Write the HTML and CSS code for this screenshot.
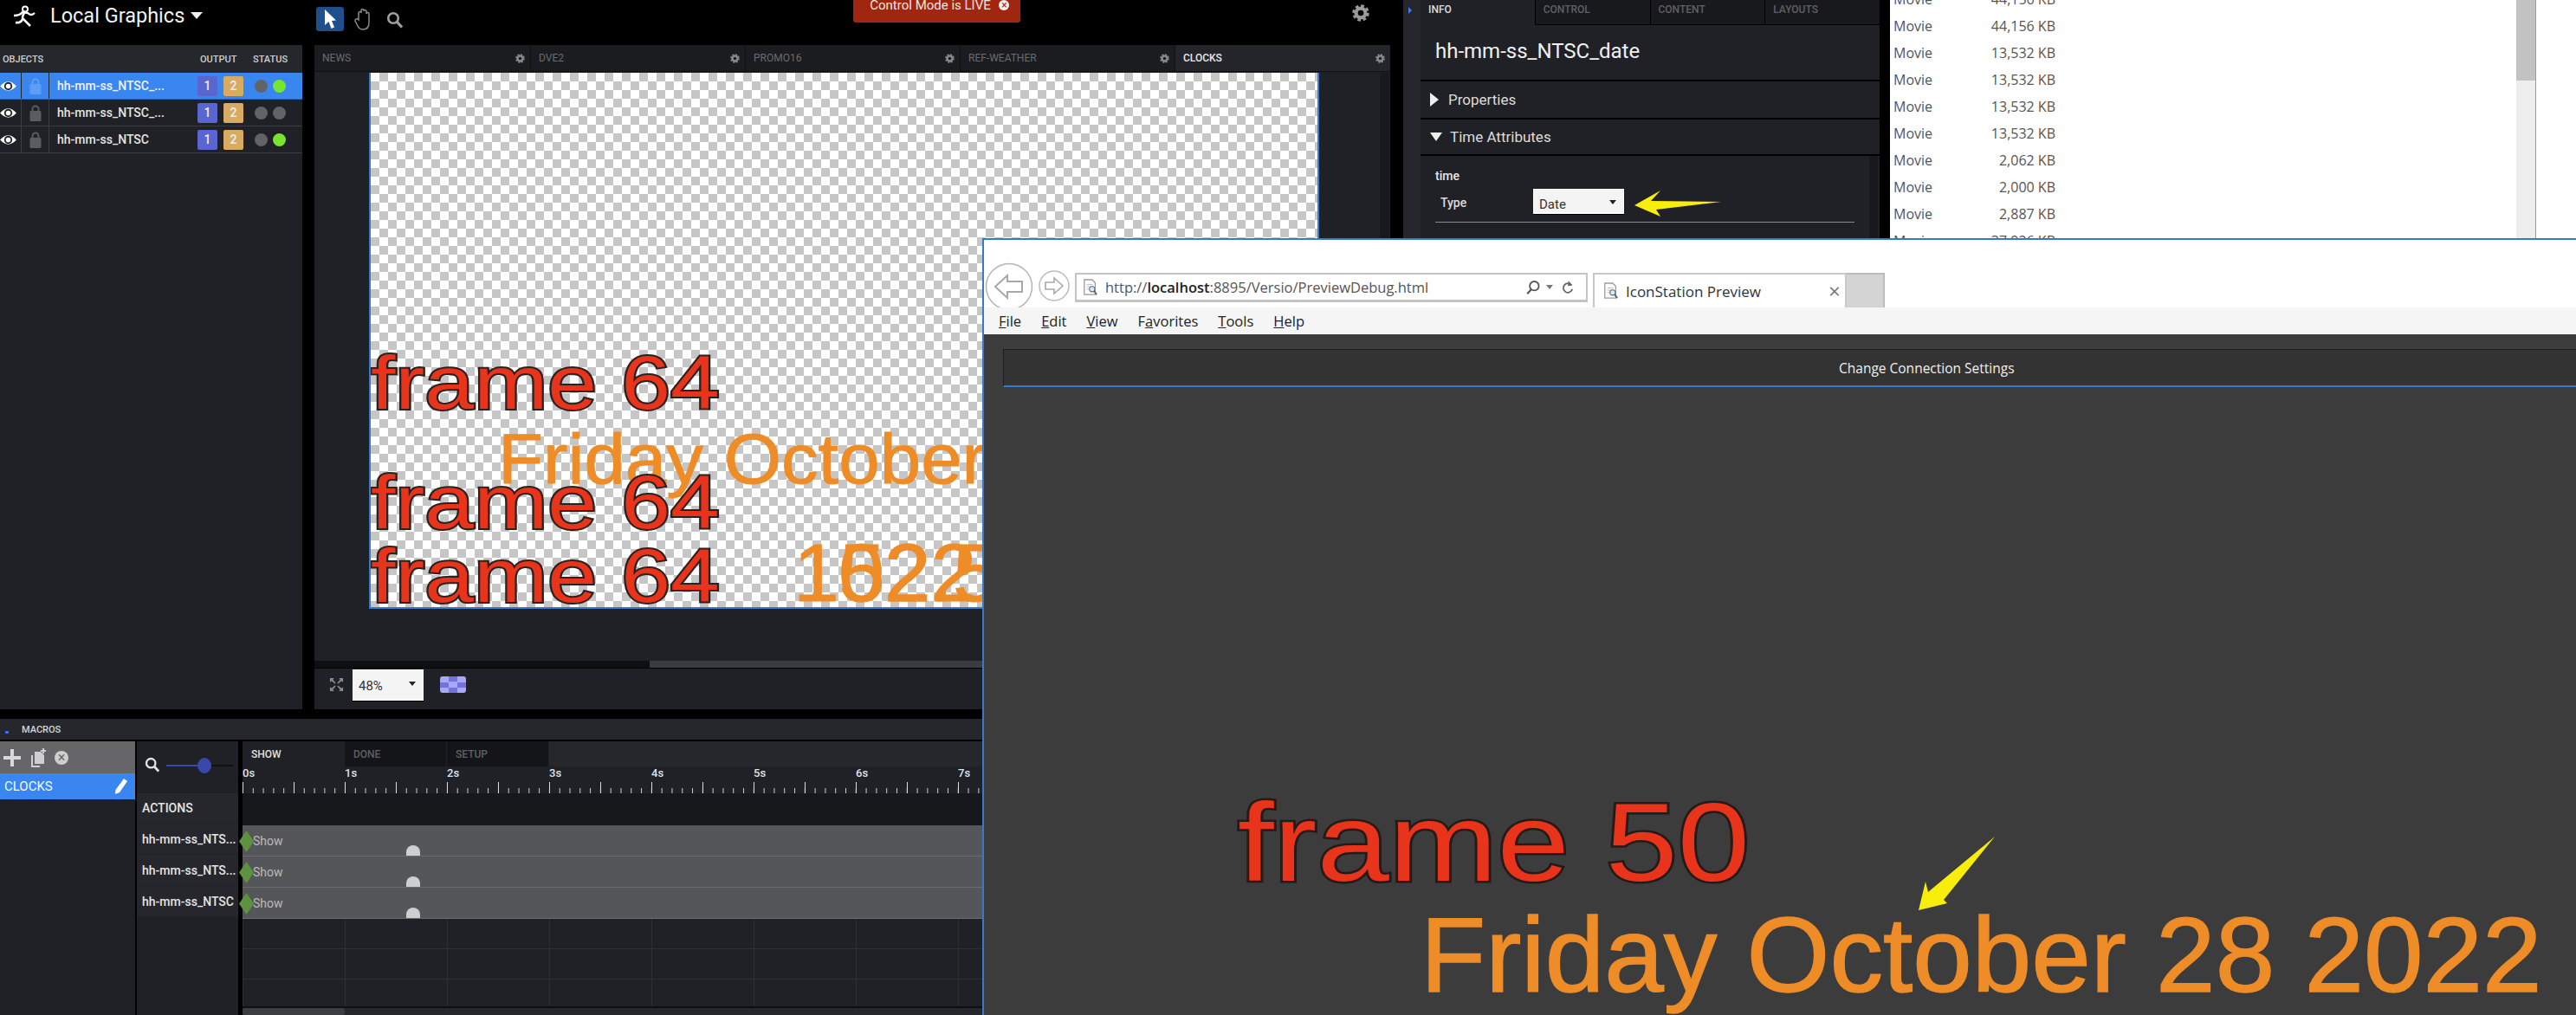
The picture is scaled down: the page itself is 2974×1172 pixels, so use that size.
FILE: index.html
```html
<!DOCTYPE html>
<html lang="en">

<head>
    <meta charset="UTF-8">
    <title>Local Graphics</title>
    <link rel="stylesheet" href="styles.css">
</head>

<body>
    <svg class="defs" width="0" height="0">
        <symbol id="gear" viewBox="0 0 24 24">
            <circle cx="12" cy="12" r="6.5" fill="none" stroke="currentColor" stroke-width="5"></circle>
            <circle cx="12" cy="12" r="10" fill="none" stroke="currentColor" stroke-width="3.4" stroke-dasharray="4.4 3.45"></circle>
        </symbol>
        <symbol id="eye" viewBox="0 0 20 16">
            <path d="M0 8 Q10 -3 20 8 Q10 19 0 8Z" fill="#fff"></path>
            <circle cx="10" cy="8" r="5" fill="#24252a"></circle>
            <circle cx="10" cy="8" r="3" fill="#fff"></circle>
        </symbol>
        <symbol id="lock" viewBox="0 0 14 20">
            <path d="M3.5 9V6a3.5 3.5 0 0 1 7 0v3" fill="none" stroke="currentColor" stroke-width="2"></path>
            <rect x="0.5" y="8" width="13" height="12" rx="1.5" fill="currentColor"></rect>
        </symbol>
        <symbol id="search" viewBox="0 0 20 20">
            <circle cx="8" cy="8" r="5.8" fill="none" stroke="currentColor" stroke-width="2.6"></circle>
            <path d="M12.5 12.5L18 18.5" stroke="currentColor" stroke-width="3.2"></path>
        </symbol>
        <symbol id="pageicon" viewBox="0 0 20 22">
            <path d="M2 1H12L16 5V20H2Z" fill="#fff" stroke="#9a9a9a" stroke-width="1.4"></path>
            <path d="M5 7H13M5 10H13M5 13H10" stroke="#b5b5b5"></path>
            <circle cx="12" cy="13" r="3.4" fill="#dfe8f2" stroke="#5f6f80" stroke-width="1.2"></circle>
            <path d="M14.5 15.5L18 20" stroke="#5f5f5f" stroke-width="2"></path>
        </symbol>
    </svg>

    <div class="app">
        <div class="work">
            <div class="topbar">
                <svg class="logo" viewBox="0 0 26 26">
                    <circle cx="14" cy="4.5" r="3" fill="none" stroke="#fff" stroke-width="2"></circle>
                    <path d="M1 12 Q8 12 11 8 L17 9 Q21 13 25 9" fill="none" stroke="#fff" stroke-width="2.4"></path>
                    <path d="M13 9 Q9 15 13 17 L20 24 M11 16 Q9 21 3 20" fill="none" stroke="#fff" stroke-width="2.6"></path>
                </svg>
                <span class="app-title">Local Graphics</span>
                <span class="caret"></span>
                <span class="tool-on">
                    <svg width="16" height="24" viewBox="0 0 16 24"><path d="M2 1V19L6.5 15L9.5 23L13 21.5L10 14L15 13.5Z" fill="#fff"></path></svg>
                </span>
                <svg class="tool-hand" viewBox="0 0 20 26">
                    <path d="M5 14V6a1.5 1.5 0 0 1 3 0V3a1.5 1.5 0 0 1 3 0V4a1.5 1.5 0 0 1 3 0V7a1.5 1.5 0 0 1 3 0V17Q17 25 10 25Q6 25 4 21L1 15Q1 12 4 13Z" fill="none" stroke="#8a8a8a" stroke-width="1.5"></path>
                </svg>
                <svg class="tool-search"><use href="#search"></use></svg>
                <div class="live-btn">Control Mode is LIVE <span class="live-x">&times;</span></div>
                <svg class="top-gear"><use href="#gear"></use></svg>
            </div>

            <div class="panes">
                <div class="objects">
                    <div class="obj-head">
                        <span class="obj-head-name">OBJECTS</span>
                        <span class="obj-head-out">OUTPUT</span>
                        <span>STATUS</span>
                    </div>
                    <div class="obj-row selected">
                        <span class="obj-eye"><svg width="19" height="15"><use href="#eye"></use></svg></span>
                        <span class="obj-lock"><svg width="14" height="20"><use href="#lock"></use></svg></span>
                        <span class="obj-name">hh-mm-ss_NTSC_...</span>
                        <span class="badge one">1</span>
                        <span class="badge two">2</span>
                        <span class="dot"></span>
                        <span class="dot green"></span>
                    </div>
                    <div class="obj-row">
                        <span class="obj-eye"><svg width="19" height="15"><use href="#eye"></use></svg></span>
                        <span class="obj-lock"><svg width="14" height="20"><use href="#lock"></use></svg></span>
                        <span class="obj-name">hh-mm-ss_NTSC_...</span>
                        <span class="badge one">1</span>
                        <span class="badge two">2</span>
                        <span class="dot"></span>
                        <span class="dot"></span>
                    </div>
                    <div class="obj-row">
                        <span class="obj-eye"><svg width="19" height="15"><use href="#eye"></use></svg></span>
                        <span class="obj-lock"><svg width="14" height="20"><use href="#lock"></use></svg></span>
                        <span class="obj-name">hh-mm-ss_NTSC</span>
                        <span class="badge one">1</span>
                        <span class="badge two">2</span>
                        <span class="dot"></span>
                        <span class="dot green"></span>
                    </div>
                </div>

                <div class="stage">
                    <div class="stage-tabs">
                        <div class="stage-tab">NEWS<svg class="tab-gear"><use href="#gear"></use></svg></div>
                        <div class="stage-tab">DVE2<svg class="tab-gear"><use href="#gear"></use></svg></div>
                        <div class="stage-tab">PROMO16<svg class="tab-gear"><use href="#gear"></use></svg></div>
                        <div class="stage-tab">REF-WEATHER<svg class="tab-gear"><use href="#gear"></use></svg></div>
                        <div class="stage-tab active">CLOCKS<svg class="tab-gear"><use href="#gear"></use></svg></div>
                    </div>
                    <div class="stage-view">
                        <div class="canvas">
                            <span class="frame-text ft1">frame 64</span>
                            <span class="date-text dt1">Friday October 28 2022</span>
                            <span class="frame-text ft2">frame 64</span>
                            <span class="frame-text ft3">frame 64</span>
                            <span class="clock-text ct1">1522</span>
                            <span class="clock-text ct2">02.5</span>
                        </div>
                        <div class="stage-vscroll"></div>
                    </div>
                    <div class="stage-scroll"><div class="stage-scroll-off"></div></div>
                    <div class="stage-tools">
                        <svg class="fit-icon" viewBox="0 0 18 18">
                            <path d="M1 1H6L4.5 3L8 7L7 8L3 4.5L1 6ZM17 1V6L15 4.5L11 8L10 7L13.5 3L12 1ZM1 17V12L3 13.500L7 10L8 11L4.500 15L6 17ZM17 17H12L13.500 15L10 11L11 10L15 13.500L17 12Z" fill="#8c8c8c"></path>
                        </svg>
                        <div class="white-select zoom-select">48%<span class="mini-caret"></span></div>
                        <div class="checker-btn"></div>
                    </div>
                </div>
            </div>

            <div class="macros-bar"><span class="macros-mark"></span>MACROS</div>
            <div class="macros">
                <div class="macro-list">
                    <div class="macro-tools">
                        <svg width="20" height="20" viewBox="0 0 20 20"><path d="M8 0H12V8H20V12H12V20H8V12H0V8H8Z" fill="#d8d8d8"></path></svg>
                        <svg width="18" height="22" viewBox="0 0 18 22"><path d="M5 4H12L16 8V18H5Z" fill="#cfcfcf"></path><path d="M2 8V21H11" fill="none" stroke="#cfcfcf" stroke-width="2"></path><path d="M15 0V6M12 3H18" stroke="#cfcfcf" stroke-width="2"></path></svg>
                        <span class="macro-x">&times;</span>
                    </div>
                    <div class="macro-item">CLOCKS
                        <svg width="16" height="20" viewBox="0 0 16 20"><path d="M11 1L15 4L6 17L1 19L1.500 14Z" fill="#fff"></path></svg>
                    </div>
                </div>
                <div class="macro-labels">
                    <div class="macro-zoom">
                        <svg class="zoom-glass"><use href="#search"></use></svg>
                        <div class="slider"><span class="slider-fill"></span><span class="slider-thumb"></span></div>
                    </div>
                    <div class="macro-label actions">ACTIONS</div>
                    <div class="macro-label">hh-mm-ss_NTS...</div>
                    <div class="macro-label">hh-mm-ss_NTS...</div>
                    <div class="macro-label">hh-mm-ss_NTSC</div>
                </div>
                <div class="timeline">
                    <div class="time-tabs">
                        <div class="time-tab active">SHOW</div>
                        <div class="time-tab">DONE</div>
                        <div class="time-tab">SETUP</div>
                    </div>
                    <div class="ruler">
                        <span>0s</span><span>1s</span><span>2s</span><span>3s</span>
                        <span>4s</span><span>5s</span><span>6s</span><span>7s</span>
                    </div>
                    <div class="actions-strip"></div>
                    <div class="track"><span class="key"></span>Show<span class="end-mark"></span></div>
                    <div class="track"><span class="key"></span>Show<span class="end-mark"></span></div>
                    <div class="track"><span class="key"></span>Show<span class="end-mark"></span></div>
                    <div class="grid-rows"></div>
                    <div class="time-scroll"><span class="time-thumb"></span></div>
                </div>
            </div>
        </div>

        <div class="side-strip"><span class="side-mark"></span></div>

        <div class="info">
            <div class="info-tabs">
                <div class="info-tab active">INFO</div>
                <div class="info-tab">CONTROL</div>
                <div class="info-tab">CONTENT</div>
                <div class="info-tab">LAYOUTS</div>
            </div>
            <div class="info-title">hh-mm-ss_NTSC_date</div>
            <div class="info-section"><span class="tri-right"></span>Properties</div>
            <div class="info-section short"><span class="tri-down"></span>Time Attributes</div>
            <div class="info-body">
                <div class="attr-box">
                    <div class="attr-name">time</div>
                    <div class="attr-row">
                        <span class="attr-label">Type</span>
                        <div class="white-select type-select">Date<span class="mini-caret"></span></div>
                    </div>
                </div>
                <div class="info-scroll"></div>
            </div>
        </div>

        <div class="files">
            <div class="file-list">
                <div class="file-row"><span class="file-type">Movie</span><span class="file-size">44,156 KB</span></div>
                <div class="file-row"><span class="file-type">Movie</span><span class="file-size">44,156 KB</span></div>
                <div class="file-row"><span class="file-type">Movie</span><span class="file-size">13,532 KB</span></div>
                <div class="file-row"><span class="file-type">Movie</span><span class="file-size">13,532 KB</span></div>
                <div class="file-row"><span class="file-type">Movie</span><span class="file-size">13,532 KB</span></div>
                <div class="file-row"><span class="file-type">Movie</span><span class="file-size">13,532 KB</span></div>
                <div class="file-row"><span class="file-type">Movie</span><span class="file-size">2,062 KB</span></div>
                <div class="file-row"><span class="file-type">Movie</span><span class="file-size">2,000 KB</span></div>
                <div class="file-row"><span class="file-type">Movie</span><span class="file-size">2,887 KB</span></div>
                <div class="file-row"><span class="file-type">Movie</span><span class="file-size">37,926 KB</span></div>
            </div>
            <div class="file-scroll"><div class="file-thumb"></div></div>
        </div>
    </div>

    <div class="browser">
        <div class="ie-bar">
            <svg class="ie-back" viewBox="0 0 56 52">
                <circle cx="28" cy="28" r="26.500" fill="#fff" stroke="#b5b5b5" stroke-width="1.500"></circle>
                <path d="M12 28L26 15V22H43V34H26V41Z" fill="#fff" stroke="#a8a8a8" stroke-width="2"></path>
            </svg>
            <svg class="ie-forward" viewBox="0 0 36 36">
                <circle cx="18" cy="18" r="17" fill="#fff" stroke="#bdbdbd" stroke-width="1.500"></circle>
                <path d="M28 18L18 9V14H8V22H18V27Z" fill="#fff" stroke="#a8a8a8" stroke-width="1.600"></path>
            </svg>
            <div class="ie-address">
                <svg class="ie-page"><use href="#pageicon"></use></svg>
                <span class="ie-url">http://<b>localhost</b>:8895/Versio/PreviewDebug.html</span>
                <svg class="ie-search" viewBox="0 0 20 20">
                    <circle cx="11.500" cy="8" r="5.800" fill="none" stroke="#555" stroke-width="2"></circle>
                    <path d="M7.500 12.500L2.500 18" stroke="#555" stroke-width="2.400"></path>
                </svg>
                <span class="ie-drop"></span>
                <svg class="ie-refresh" viewBox="0 0 16 20">
                    <path d="M13 7A6 6 0 1 0 14 12" fill="none" stroke="#666" stroke-width="2"></path>
                    <path d="M9 1L14 7L8 8Z" fill="#666"></path>
                </svg>
            </div>
            <div class="ie-tab">
                <svg class="ie-page"><use href="#pageicon"></use></svg>
                <span class="ie-tab-name">IconStation Preview</span>
                <span class="ie-tab-x">&times;</span>
            </div>
            <div class="ie-newtab"></div>
        </div>
        <div class="ie-menu">
            <span><u>F</u>ile</span>
            <span><u>E</u>dit</span>
            <span><u>V</u>iew</span>
            <span>F<u>a</u>vorites</span>
            <span><u>T</u>ools</span>
            <span><u>H</u>elp</span>
        </div>
        <div class="preview">
            <div class="conn-btn">Change Connection Settings</div>
            <span class="frame-text big-frame">frame 50</span>
            <span class="date-text big-date">Friday October 28 2022</span>
        </div>
    </div>

    <svg class="notes" width="2974" height="1172" viewBox="0 0 2974 1172">
        <polygon points="1887,237 1917,220 1906,232 1987,233 1912,242 1917,250" fill="#f7ee0c"></polygon>
        <polygon points="2303,966 2226,1030 2223,1018 2215,1051 2248,1043 2244,1039" fill="#f7ee0c"></polygon>
    </svg>
</body>

</html>
```

FILE: styles.css
```css
/* General */
html, body {
    margin: 0;
    padding: 0;
}

body {
    position: relative;
    width: 2974px;
    height: 1172px;
    overflow: hidden;
    background-color: #000;
    color: #e8e8e8;
    font-family: Roboto, "Liberation Sans", sans-serif;
}

.defs {
    position: absolute;
}

.app {
    display: flex;
    height: 1172px;
}

.work {
    width: 1620px;
    flex: none;
    display: flex;
    flex-direction: column;
}

/* Top bar */
.topbar {
    height: 52px;
    display: flex;
    align-items: flex-start;
    flex: none;
}

.logo {
    width: 26px;
    height: 26px;
    margin: 6px 0 0 15px;
}

.app-title {
    margin: 3px 0 0 17px;
    font-size: 23.5px;
    line-height: 30px;
    color: #f2f2f2;
}

.caret {
    margin: 14px 0 0 7px;
    border-left: 7px solid transparent;
    border-right: 7px solid transparent;
    border-top: 8px solid #f2f2f2;
}

.tool-on {
    width: 32px;
    height: 28px;
    margin: 8px 0 0 131px;
    border-radius: 3px;
    background-color: #1f4e8c;
    display: flex;
    align-items: center;
    justify-content: center;
}

.tool-hand {
    width: 20px;
    height: 26px;
    margin: 9px 0 0 12px;
}

.tool-search {
    width: 20px;
    height: 20px;
    margin: 13px 0 0 17px;
    color: #a0a0a0;
}

.live-btn {
    width: 193px;
    height: 26px;
    margin-left: 519px;
    box-sizing: border-box;
    padding-left: 19px;
    background-color: #a02610;
    border-radius: 0 0 3px 3px;
    font-size: 15px;
    line-height: 11px;
    color: #f3e4e0;
    white-space: nowrap;
}

.live-x {
    display: inline-block;
    width: 12px;
    height: 12px;
    margin-left: 6px;
    border-radius: 50%;
    background-color: #eee;
    color: #a02610;
    font-size: 12px;
    line-height: 12px;
    text-align: center;
    vertical-align: 1px;
}

.top-gear {
    width: 20px;
    height: 20px;
    margin: 5px 0 0 383px;
    color: #9a9a9a;
}

/* Objects and stage */
.panes {
    height: 767px;
    display: flex;
    gap: 14px;
    flex: none;
}

.objects {
    width: 349px;
    flex: none;
    background-color: #202126;
}

.obj-head {
    height: 32px;
    display: flex;
    align-items: center;
    background-color: #26272c;
    font-size: 11px;
    font-weight: 500;
    color: #cfcfcf;
}

.obj-head-name {
    width: 231px;
    padding-left: 3px;
    box-sizing: border-box;
}

.obj-head-out {
    width: 61px;
}

.obj-row {
    height: 30px;
    display: flex;
    align-items: center;
    border-bottom: 1px solid #3b3c41;
    font-size: 14px;
    font-weight: 500;
    color: #e4e4e4;
}

.obj-row.selected {
    background-color: #3a86f0;
    border-bottom-color: #2b66ba;
}

.obj-eye {
    width: 25px;
    height: 100%;
    box-sizing: border-box;
    border-right: 1px solid #3b3c41;
    display: flex;
    align-items: center;
}

.obj-lock {
    width: 32px;
    height: 100%;
    box-sizing: border-box;
    border-right: 1px solid #3b3c41;
    display: flex;
    align-items: center;
    justify-content: center;
    color: #5b5c61;
}

.selected .obj-lock {
    color: #5f9ef5;
}

.selected .obj-eye, .selected .obj-lock {
    border-right-color: #24252a;
}

.obj-name {
    width: 171px;
    padding-left: 9px;
    box-sizing: border-box;
    white-space: nowrap;
}

.selected .obj-name {
    color: #eef4fe;
}

.badge {
    width: 23px;
    height: 23px;
    margin-right: 7px;
    border-radius: 2px;
    font-size: 14px;
    line-height: 23px;
    text-align: center;
    color: #eee;
}

.badge.one {
    background-color: #5a66cf;
}

.badge.two {
    margin-right: 13px;
    background-color: #d7ab62;
}

.dot {
    width: 15px;
    height: 15px;
    margin-right: 6px;
    border-radius: 50%;
    background-color: #626368;
}

.dot.green {
    background-color: #77e530;
}

.stage {
    flex: 1;
    display: flex;
    flex-direction: column;
    margin-right: 16px;
    background-color: #202126;
}

.stage-tabs {
    height: 30px;
    display: flex;
    flex: none;
    border-bottom: 1px solid #111;
    background-color: #1b1c20;
}

.stage-tab {
    width: 248px;
    box-sizing: border-box;
    padding: 0 6px 0 9px;
    border-right: 1px solid #101114;
    display: flex;
    align-items: center;
    justify-content: space-between;
    font-size: 12px;
    color: #6a6b70;
}

.stage-tab:first-child {
    width: 250px;
}

.stage-tab.active {
    background-color: #24252a;
    color: #e8e8e8;
    font-weight: 500;
    border-right: none;
}

.tab-gear {
    width: 11px;
    height: 11px;
    color: #8c8c8c;
}

.stage-view {
    height: 680px;
    box-sizing: border-box;
    padding: 1px 0 0 63px;
    flex: none;
    display: flex;
    align-items: flex-start;
    background-color: #202126;
}

.canvas {
    position: relative;
    width: 1093px;
    height: 617px;
    flex: none;
    overflow: hidden;
    border-left: 2px solid #3a78c8;
    border-right: 2px solid #3a78c8;
    border-bottom: 2px solid #3a78c8;
    background-color: #fff;
    background-image: conic-gradient(#c6c6c6 25%, #fff 25% 50%, #c6c6c6 50% 75%, #fff 75%);
    background-size: 20px 20px;
}

.stage-vscroll {
    width: 11px;
    height: 100%;
    margin-left: 70px;
    background-color: #18191c;
}

/* Text that lies on the preview canvas */
.frame-text, .date-text, .clock-text {
    position: absolute;
    font-family: "Liberation Sans", Arial, sans-serif;
    line-height: 1;
    white-space: nowrap;
    transform-origin: left top;
}

.frame-text {
    color: #e8341a;
    -webkit-text-stroke: 4px #2a2120;
    paint-order: stroke fill;
    font-size: 88px;
    transform: scaleX(1.16);
}

.date-text {
    color: #ee8c27;
    -webkit-text-stroke: 1px #ee8c27;
    font-size: 82px;
    transform: scaleX(1.04);
}

.clock-text {
    color: #ee8c27;
    -webkit-text-stroke: 1px #ee8c27;
    font-size: 95px;
}

.ft1 {
    left: 0;
    top: 314px;
}

.ft2 {
    left: 0;
    top: 452px;
}

.ft3 {
    left: 0;
    top: 537px;
}

.dt1 {
    left: 147px;
    top: 405px;
}

.ct1 {
    left: 488px;
    top: 530px;
}

.ct2 {
    left: 540px;
    top: 530px;
}

.stage-scroll {
    height: 8px;
    flex: none;
    background-color: #3b3c40;
}

.stage-scroll-off {
    width: 387px;
    height: 100%;
    background-color: #0e0f11;
}

.stage-tools {
    flex: 1;
    display: flex;
    align-items: flex-start;
    background-color: #202126;
    border-top: 1px solid #000;
}

.fit-icon {
    width: 17px;
    height: 17px;
    margin: 10px 0 0 17px;
}

.white-select {
    position: relative;
    background-color: #f4f4f4;
    border: 1px solid #fff;
    border-bottom: 2px solid #fff;
    box-sizing: border-box;
    color: #333;
    font-size: 15px;
    box-shadow: 0 1px 0 #000;
}

.zoom-select {
    width: 82px;
    height: 36px;
    margin: 1px 0 0 10px;
    padding-left: 6px;
    line-height: 36px;
}

.mini-caret {
    position: absolute;
    right: 8px;
    top: 13px;
    border-left: 4px solid transparent;
    border-right: 4px solid transparent;
    border-top: 5px solid #222;
}

.checker-btn {
    width: 30px;
    height: 19px;
    margin: 9px 0 0 19px;
    border-radius: 3px;
    background-color: #8d8df0;
    background-image: conic-gradient(#7474d8 25%, #a8a8f6 25% 50%, #7474d8 50% 75%, #a8a8f6 75%);
    background-size: 20px 13px;
}

/* Macros */
.macros-bar {
    height: 24px;
    margin-top: 11px;
    flex: none;
    display: flex;
    align-items: center;
    background-color: #26272c;
    font-size: 11px;
    font-weight: 500;
    color: #d6d6d6;
}

.macros-mark {
    width: 4px;
    height: 3px;
    margin: 6px 15px 0 6px;
    background-color: #3a6cf0;
}

.macros {
    flex: 1;
    display: flex;
    margin-top: 2px;
}

.macro-list {
    width: 156px;
    flex: none;
    background-color: #202126;
}

.macro-tools {
    height: 37px;
    display: flex;
    align-items: center;
    gap: 11px;
    padding-left: 4px;
    background-color: #666669;
}

.macro-x {
    width: 16px;
    height: 16px;
    margin-left: -1px;
    border-radius: 50%;
    background-color: #cfcfcf;
    color: #666;
    font-size: 16px;
    line-height: 15px;
    text-align: center;
}

.macro-item {
    height: 30px;
    padding: 0 8px 0 5px;
    display: flex;
    align-items: center;
    justify-content: space-between;
    background-color: #3a86f0;
    font-size: 15px;
    color: #f2f6fe;
}

.macro-labels {
    width: 117px;
    margin-left: 2px;
    flex: none;
    background-color: #202126;
}

.macro-zoom {
    height: 60px;
    display: flex;
    align-items: flex-start;
}

.zoom-glass {
    width: 18px;
    height: 18px;
    margin: 18px 0 0 9px;
    color: #e0e0e0;
}

.slider {
    position: relative;
    width: 77px;
    height: 2px;
    margin: 27px 0 0 7px;
    background-color: #111;
}

.slider-fill {
    display: block;
    width: 44px;
    height: 100%;
    background-color: #3949ab;
}

.slider-thumb {
    position: absolute;
    left: 36px;
    top: -8px;
    width: 16px;
    height: 18px;
    border-radius: 50%;
    background-color: #3949ab;
}

.macro-label {
    height: 35px;
    margin-bottom: 1px;
    padding-left: 6px;
    display: flex;
    align-items: center;
    background-color: #26272c;
    font-size: 14px;
    font-weight: 500;
    color: #e4e4e4;
    white-space: nowrap;
}

.macro-label.actions {
    height: 34px;
}

.timeline {
    flex: 1;
    margin-left: 5px;
    display: flex;
    flex-direction: column;
    background-color: #202126;
}

.time-tabs {
    height: 29px;
    display: flex;
    flex: none;
    background-color: #26272c;
}

.time-tab {
    width: 118px;
    padding-left: 10px;
    box-sizing: border-box;
    display: flex;
    align-items: center;
    background-color: #141518;
    border-right: 1px solid #222;
    font-size: 12px;
    font-weight: 500;
    color: #5f6065;
}

.time-tab.active {
    background-color: #202126;
    color: #e0e0e0;
}

.ruler {
    height: 31px;
    flex: none;
    display: flex;
    background-color: #202126;
    background-image: linear-gradient(to right, #dcdcdc 1.4px, transparent 1.4px), linear-gradient(to right, #cfcfcf 1.2px, transparent 1.2px);
    background-repeat: repeat-x;
    background-size: 59px 13px, 11.8px 6px;
    background-position: 0 bottom, 0 bottom;
    padding-bottom: 3px;
    box-sizing: border-box;
}

.ruler span {
    width: 118px;
    flex: none;
    font-size: 13px;
    font-weight: 500;
    line-height: 16px;
    color: #dfe3ea;
}

.actions-strip {
    height: 37px;
    flex: none;
    background-color: #17181b;
}

.track {
    position: relative;
    height: 35px;
    flex: none;
    padding-left: 12px;
    display: flex;
    align-items: center;
    background-color: #55565a;
    border-bottom: 1px solid #6b6c70;
    font-size: 14px;
    color: #b9babd;
}

.key {
    position: absolute;
    left: -4px;
    top: 6px;
    width: 17px;
    height: 25px;
    background-color: #5e9140;
    clip-path: polygon(50% 0, 100% 50%, 50% 100%, 0 50%);
}

.end-mark {
    position: absolute;
    left: 189px;
    bottom: 0;
    width: 16px;
    height: 12px;
    border-radius: 8px 8px 0 0;
    background-color: #cfcfcf;
}

.grid-rows {
    flex: 1;
    background-image: linear-gradient(to right, #2e2f33 1px, transparent 1px), linear-gradient(to bottom, transparent 34px, #2e2f33 34px, #2e2f33 35px);
    background-size: 118px 100%, 100% 35px;
    border-bottom: 2px solid #0e0f11;
}

.time-scroll {
    height: 8px;
    flex: none;
    background-color: #26272c;
}

.time-thumb {
    display: block;
    width: 118px;
    height: 100%;
    background-color: #3d3e42;
    border-radius: 3px;
}

/* Info panel */
.side-strip {
    width: 20px;
    flex: none;
    background-color: #26272c;
}

.side-mark {
    display: block;
    width: 0;
    height: 0;
    margin: 8px 0 0 6px;
    border-top: 4px solid transparent;
    border-bottom: 4px solid transparent;
    border-left: 4px solid #3a7cf0;
}

.info {
    width: 530px;
    flex: none;
    background-color: #000;
}

.info-tabs {
    height: 29px;
    display: flex;
    background-color: #18191c;
}

.info-tab {
    width: 133px;
    box-sizing: border-box;
    padding: 0 0 7px 9px;
    display: flex;
    align-items: center;
    border-left: 1px solid #000;
    border-bottom: 1px solid #000;
    font-size: 12px;
    font-weight: 500;
    color: #5f6065;
}

.info-tab.active {
    width: 132px;
    border: none;
    background-color: #202126;
    color: #dcdcdc;
}

.info-title {
    height: 63px;
    padding: 8px 0 0 17px;
    box-sizing: border-box;
    background-color: #202126;
    font-size: 24px;
    line-height: 44px;
    color: #f0f0f0;
}

.info-section {
    height: 42px;
    margin-top: 2px;
    padding-left: 11px;
    display: flex;
    align-items: center;
    background-color: #202126;
    font-size: 17px;
    color: #dcdcdc;
}

.info-section.short {
    height: 40px;
}

.tri-right {
    margin-right: 11px;
    border-top: 8px solid transparent;
    border-bottom: 8px solid transparent;
    border-left: 10px solid #eee;
}

.tri-down {
    margin-right: 9px;
    border-left: 7px solid transparent;
    border-right: 7px solid transparent;
    border-top: 10px solid #eee;
}

.info-body {
    height: 96px;
    margin-top: 2px;
    display: flex;
    background-color: #202126;
}

.attr-box {
    width: 484px;
    height: 76px;
    margin-left: 17px;
    border-bottom: 1px solid #8a8a8a;
}

.attr-name {
    margin-top: 14px;
    font-size: 14px;
    font-weight: 500;
    line-height: 18px;
    color: #e8e8e8;
}

.attr-row {
    display: flex;
    align-items: center;
    height: 30px;
    margin-top: 5px;
}

.attr-label {
    width: 113px;
    padding: 4px 0 0 6px;
    box-sizing: border-box;
    font-size: 14px;
    font-weight: 500;
    color: #dcdcdc;
}

.type-select {
    width: 105px;
    height: 29px;
    padding: 6px 0 0 6px;
    line-height: 22px;
}

.type-select .mini-caret {
    top: 12px;
}

.info-scroll {
    width: 10px;
    margin-left: 17px;
    background-color: #18191c;
}

/* File list behind the browser */
.files {
    flex: 1;
    margin-left: 12px;
    display: flex;
    background-color: #fff;
    padding-right: 46px;
    font-family: "Open Sans", sans-serif;
    font-size: 16px;
    color: #555;
}

.file-list {
    flex: 1;
    margin-top: -17px;
}

.file-row {
    width: 187px;
    height: 31px;
    display: flex;
    align-items: center;
    justify-content: space-between;
    padding-left: 4px;
}

.file-scroll {
    width: 22px;
    background-color: #eee;
    border-right: 1px solid #9a9a9a;
}

.file-thumb {
    height: 93px;
    background-color: #c2c2c2;
}

/* Browser window */
.browser {
    position: absolute;
    left: 1134px;
    top: 275px;
    width: 1840px;
    height: 897px;
    display: flex;
    flex-direction: column;
    box-sizing: border-box;
    border-left: 2px solid #3a78c8;
    border-top: 2px solid #3a78c8;
    background-color: #fff;
    font-family: "Open Sans", sans-serif;
    font-size: 16.500px;
    color: #444;
}

.ie-bar {
    position: relative;
    height: 78px;
    flex: none;
    display: flex;
    align-items: flex-end;
    overflow: hidden;
}

.ie-back {
    width: 56px;
    height: 52px;
    margin-left: 1px;
    flex: none;
}

.ie-forward {
    width: 36px;
    height: 36px;
    margin: 0 0 7px 6px;
    flex: none;
}

.ie-address {
    width: 592px;
    height: 34px;
    margin: 0 0 6px 6px;
    flex: none;
    display: flex;
    align-items: center;
    box-sizing: border-box;
    border: 2px solid #c4c4c4;
    border-bottom-width: 3px;
}

.ie-page {
    width: 18px;
    height: 20px;
    flex: none;
    margin: 0 8px 0 7px;
}

.ie-url {
    width: 489px;
    flex: none;
    white-space: nowrap;
    color: #555;
}

.ie-url b {
    color: #222;
    font-weight: 600;
}

.ie-search {
    width: 18px;
    height: 18px;
    flex: none;
    margin-left: -4px;
}

.ie-drop {
    margin: 0 10px 0 6px;
    border-left: 4px solid transparent;
    border-right: 4px solid transparent;
    border-top: 5px solid #777;
}

.ie-refresh {
    width: 14px;
    height: 18px;
    flex: none;
}

.ie-tab {
    width: 293px;
    height: 40px;
    margin-left: 6px;
    flex: none;
    display: flex;
    align-items: center;
    box-sizing: border-box;
    border: 2px solid #c8c8c8;
    border-bottom: none;
}

.ie-tab .ie-page {
    margin: 0 8px 0 10px;
}

.ie-tab-name {
    width: 200px;
    font-size: 17px;
    white-space: nowrap;
    color: #333;
}

.ie-tab-x {
    font-size: 24px;
    line-height: 22px;
    margin-left: 34px;
    color: #777;
}

.ie-newtab {
    width: 44px;
    height: 40px;
    flex: none;
    box-sizing: border-box;
    background-color: #d4d4d4;
    border-top: 2px solid #bbb;
    border-right: 2px solid #bbb;
}

.ie-menu {
    height: 30px;
    flex: none;
    display: flex;
    align-items: center;
    gap: 23px;
    padding-left: 17px;
    background-color: #f5f5f5;
    border-bottom: 1px solid #fff;
    color: #222;
}

.preview {
    position: relative;
    flex: 1;
    padding: 17px 0 0 22px;
    background-color: #3c3c3c;
}

.conn-btn {
    height: 44px;
    box-sizing: border-box;
    display: flex;
    align-items: center;
    padding-left: 964px;
    border-left: 1px solid #1c1c1c;
    border-top: 1px solid #1c1c1c;
    border-bottom: 2px solid #3a78c8;
    background-color: #333;
    font-size: 15.500px;
    color: #f0f0f0;
}

.big-frame {
    left: 293px;
    top: 523px;
    font-size: 128px;
    -webkit-text-stroke: 5px #241a18;
    transform: scaleX(1.17);
}

.big-date {
    left: 504px;
    top: 656px;
    font-size: 122px;
    -webkit-text-stroke: 1.500px #ee8c27;
    transform: scaleX(1.01);
}

/* Annotation arrows drawn over the whole screenshot */
.notes {
    position: absolute;
    left: 0;
    top: 0;
}
```
